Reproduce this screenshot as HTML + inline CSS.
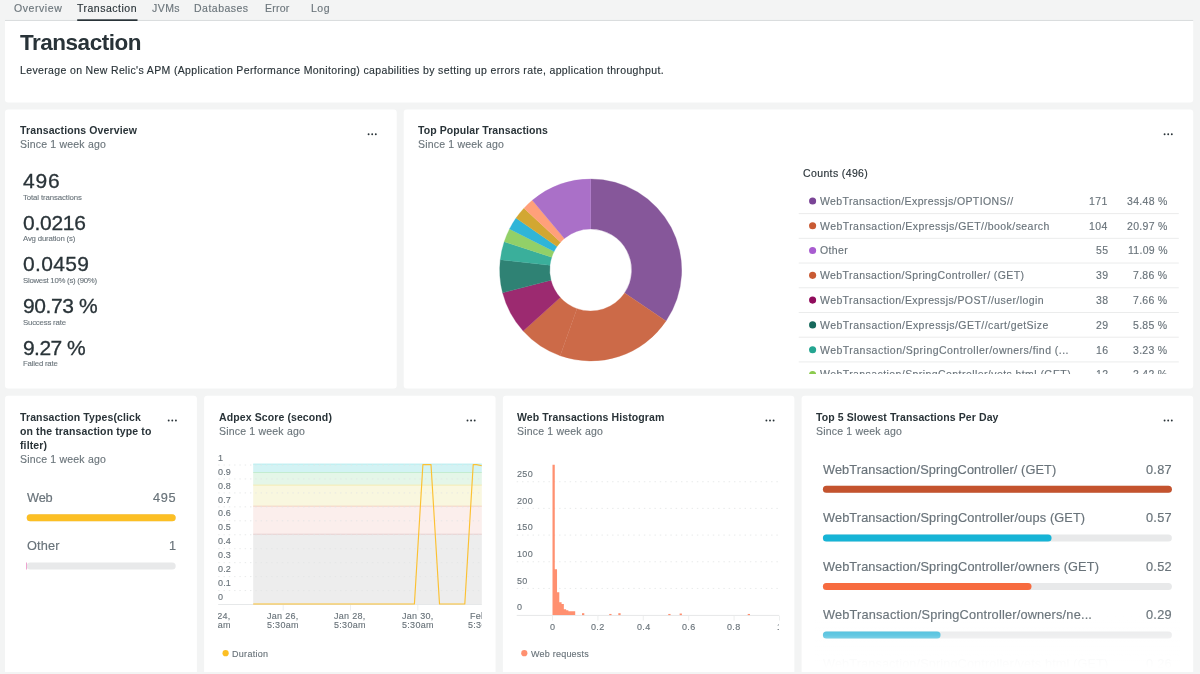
<!DOCTYPE html><html lang="en"><head><meta charset="utf-8"><title>Transaction</title><style>
html,body{margin:0;padding:0}
body{width:1200px;height:674px;overflow:hidden;background:#f3f4f4;font-family:"Liberation Sans", sans-serif;position:relative;-webkit-font-smoothing:antialiased}
.card{position:absolute;overflow:hidden}
.t{position:absolute;white-space:pre;line-height:1;display:block;will-change:transform}
.abs{position:absolute;display:block}
.clip{overflow:hidden}
.fade{background:linear-gradient(to bottom,rgba(255,255,255,0) 0%,rgba(255,255,255,.08) 17%,rgba(255,255,255,.25) 39%,rgba(255,255,255,.6) 56%,rgba(255,255,255,.94) 66%,rgba(255,255,255,.975) 85%,#fff 95%,#fff 100%)}
</style></head><body><svg class="abs" style="left:0;top:0" width="1200" height="674" fill="#fff"><path d="M5 21.0H1193.2V99.45A3 3 0 0 1 1190.2 102.45H8A3 3 0 0 1 5 99.45V21.0Z"/><path d="M8 109.5H393.7A3 3 0 0 1 396.7 112.5V385.5A3 3 0 0 1 393.7 388.5H8A3 3 0 0 1 5 385.5V112.5A3 3 0 0 1 8 109.5Z"/><path d="M406.7 109.5H1190.2A3 3 0 0 1 1193.2 112.5V385.5A3 3 0 0 1 1190.2 388.5H406.7A3 3 0 0 1 403.7 385.5V112.5A3 3 0 0 1 406.7 109.5Z"/><path d="M8 395.7H193.9A3 3 0 0 1 196.9 398.7V672H5V398.7A3 3 0 0 1 8 395.7Z"/><path d="M207.1 395.7H492.55A3 3 0 0 1 495.55 398.7V672H204.1V398.7A3 3 0 0 1 207.1 395.7Z"/><path d="M505.9 395.7H791.35A3 3 0 0 1 794.35 398.7V672H502.9V398.7A3 3 0 0 1 505.9 395.7Z"/><path d="M804.6 395.7H1190.2A3 3 0 0 1 1193.2 398.7V672H801.6V398.7A3 3 0 0 1 804.6 395.7Z"/></svg><nav class="card nav" style="left:0px;top:0px;width:1200px;height:21px"><span class="t" style="left:14.10px;top:2.71px;font-size:10.5px;color:#6b757b;letter-spacing:0.567px;-webkit-text-stroke:0.147px #6b757b;">Overview</span><span class="t" style="left:77.40px;top:2.71px;font-size:10.5px;color:#293338;letter-spacing:0.503px;-webkit-text-stroke:0.147px #293338;">Transaction</span><span class="t" style="left:152.10px;top:2.71px;font-size:10.5px;color:#6b757b;letter-spacing:0.438px;-webkit-text-stroke:0.147px #6b757b;">JVMs</span><span class="t" style="left:194.40px;top:2.71px;font-size:10.5px;color:#6b757b;letter-spacing:0.489px;-webkit-text-stroke:0.147px #6b757b;">Databases</span><span class="t" style="left:265.20px;top:2.71px;font-size:10.5px;color:#6b757b;letter-spacing:0.251px;-webkit-text-stroke:0.147px #6b757b;">Error</span><span class="t" style="left:310.50px;top:2.71px;font-size:10.5px;color:#6b757b;letter-spacing:0.490px;-webkit-text-stroke:0.147px #6b757b;">Log</span><svg class="abs" style="left:0;top:17px" width="1200" height="5"><rect x="5" y="2.95" width="1188.2" height="1" fill="#d9dcdd"/><rect x="77.2" y="2.3" width="60.3" height="1.75" fill="#293338"/></svg></nav><header class="card hdr" style="left:5px;top:21px;width:1189px;height:82px"><span class="t" style="left:15.00px;top:10.65px;font-size:22.5px;font-weight:700;color:#293338;letter-spacing:-0.482px;">Transaction</span><span class="t" style="left:15.00px;top:44.31px;font-size:10.5px;color:#293338;letter-spacing:0.360px;-webkit-text-stroke:0.147px #293338;">Leverage on New Relic's APM (Application Performance Monitoring) capabilities by setting up errors rate, application throughput.</span></header><section class="card " style="left:5px;top:109px;width:392px;height:280px"><span class="t" style="left:15.00px;top:16.11px;font-size:10.5px;font-weight:700;color:#293338;letter-spacing:0.124px;">Transactions Overview</span><span class="t" style="left:15.00px;top:30.21px;font-size:10.5px;color:#6b757b;letter-spacing:0.194px;-webkit-text-stroke:0.147px #6b757b;">Since 1 week ago</span><svg class="abs" style="left:362px;top:23px" width="14" height="6" fill="#293338"><circle cx="1.60" cy="2.30" r="0.95"/><circle cx="5.20" cy="2.30" r="0.95"/><circle cx="8.80" cy="2.30" r="0.95"/></svg><span class="t" style="left:18.00px;top:61.12px;font-size:21px;color:#293338;letter-spacing:0.818px;-webkit-text-stroke:0.3px #293338;">496</span><span class="t" style="left:18.00px;top:84.70px;font-size:7.8px;color:#69737a;letter-spacing:-0.105px;-webkit-text-stroke:0.109px #69737a;">Total transactions</span><span class="t" style="left:18.00px;top:102.77px;font-size:21px;color:#293338;letter-spacing:-0.256px;-webkit-text-stroke:0.3px #293338;">0.0216</span><span class="t" style="left:18.00px;top:126.35px;font-size:7.8px;color:#69737a;letter-spacing:-0.169px;-webkit-text-stroke:0.109px #69737a;">Avg duration (s)</span><span class="t" style="left:18.00px;top:144.42px;font-size:21px;color:#293338;letter-spacing:0.344px;-webkit-text-stroke:0.3px #293338;">0.0459</span><span class="t" style="left:18.00px;top:168.00px;font-size:7.8px;color:#69737a;letter-spacing:-0.262px;-webkit-text-stroke:0.109px #69737a;">Slowest 10% (s) (90%)</span><span class="t" style="left:18.00px;top:186.07px;font-size:21px;color:#293338;letter-spacing:-0.380px;-webkit-text-stroke:0.3px #293338;">90.73 %</span><span class="t" style="left:18.00px;top:209.65px;font-size:7.8px;color:#69737a;letter-spacing:-0.190px;-webkit-text-stroke:0.109px #69737a;">Success rate</span><span class="t" style="left:18.00px;top:227.72px;font-size:21px;color:#293338;letter-spacing:-0.565px;-webkit-text-stroke:0.3px #293338;">9.27 %</span><span class="t" style="left:18.00px;top:251.30px;font-size:7.8px;color:#69737a;letter-spacing:-0.204px;-webkit-text-stroke:0.109px #69737a;">Failed rate</span></section><section class="card " style="left:403px;top:109px;width:791px;height:280px"><span class="t" style="left:15.30px;top:16.11px;font-size:10.5px;font-weight:700;color:#293338;letter-spacing:0.076px;">Top Popular Transactions</span><span class="t" style="left:15.30px;top:30.21px;font-size:10.5px;color:#6b757b;letter-spacing:0.194px;-webkit-text-stroke:0.147px #6b757b;">Since 1 week ago</span><svg class="abs" style="left:760px;top:23px" width="14" height="6" fill="#293338"><circle cx="1.60" cy="2.30" r="0.95"/><circle cx="5.20" cy="2.30" r="0.95"/><circle cx="8.80" cy="2.30" r="0.95"/></svg><svg class="abs" style="left:0;top:0" width="791.0" height="280.0"><path d="M187.70 70.00A91 91 0 0 1 263.04 212.04L221.65 183.99A41 41 0 0 0 187.70 120.00Z" fill="#86579a" stroke="#86579a" stroke-width="0.3"/><path d="M263.04 212.04A91 91 0 0 1 157.18 246.73L173.95 199.63A41 41 0 0 0 221.65 183.99Z" fill="#cc6a48" stroke="#cc6a48" stroke-width="0.3"/><path d="M157.18 246.73A91 91 0 0 1 120.18 222.01L157.28 188.49A41 41 0 0 0 173.95 199.63Z" fill="#cc6a48" stroke="#cc6a48" stroke-width="0.3"/><path d="M120.18 222.01A91 91 0 0 1 99.60 183.81L148.01 171.28A41 41 0 0 0 157.28 188.49Z" fill="#9c2a70" stroke="#9c2a70" stroke-width="0.3"/><path d="M99.60 183.81A91 91 0 0 1 97.29 150.65L146.97 156.34A41 41 0 0 0 148.01 171.28Z" fill="#2f8274" stroke="#2f8274" stroke-width="0.3"/><path d="M97.29 150.65A91 91 0 0 1 101.23 132.66L148.74 148.23A41 41 0 0 0 146.97 156.34Z" fill="#3aaf9b" stroke="#3aaf9b" stroke-width="0.3"/><path d="M101.23 132.66A91 91 0 0 1 106.51 119.89L151.12 142.48A41 41 0 0 0 148.74 148.23Z" fill="#92d068" stroke="#92d068" stroke-width="0.3"/><path d="M106.51 119.89A91 91 0 0 1 113.01 109.01L154.05 137.58A41 41 0 0 0 151.12 142.48Z" fill="#2fb5d8" stroke="#2fb5d8" stroke-width="0.3"/><path d="M113.01 109.01A91 91 0 0 1 120.95 99.14L157.63 133.13A41 41 0 0 0 154.05 137.58Z" fill="#d2a732" stroke="#d2a732" stroke-width="0.3"/><path d="M120.95 99.14A91 91 0 0 1 129.30 91.21L161.39 129.56A41 41 0 0 0 157.63 133.13Z" fill="#ffa07a" stroke="#ffa07a" stroke-width="0.3"/><path d="M129.30 91.21A91 91 0 0 1 187.70 70.00L187.70 120.00A41 41 0 0 0 161.39 129.56Z" fill="#aa70c8" stroke="#aa70c8" stroke-width="0.3"/></svg><span class="t" style="left:400.30px;top:58.71px;font-size:10.5px;color:#293338;letter-spacing:0.375px;-webkit-text-stroke:0.147px #293338;">Counts (496)</span><svg class="abs" style="left:404px;top:87px" width="11" height="11"><circle cx="5.60" cy="5.00" r="3.55" fill="#7a4496"/></svg><span class="t" style="left:416.60px;top:86.91px;font-size:10.5px;color:#69737a;letter-spacing:0.388px;-webkit-text-stroke:0.147px #69737a;">WebTransaction/Expressjs/OPTIONS//</span><span class="t" style="left:686.37px;top:86.91px;font-size:10.5px;color:#69737a;letter-spacing:0.450px;-webkit-text-stroke:0.147px #69737a;">171</span><span class="t" style="left:723.97px;top:86.91px;font-size:10.5px;color:#69737a;letter-spacing:0.300px;-webkit-text-stroke:0.147px #69737a;">34.48 %</span><svg class="abs" style="left:395px;top:102px" width="382" height="5"><rect x="0.70" y="2.10" width="380.10" height="1" fill="#ebecec"/></svg><svg class="abs" style="left:404px;top:111px" width="11" height="11"><circle cx="5.60" cy="5.78" r="3.55" fill="#c95a33"/></svg><span class="t" style="left:416.60px;top:111.69px;font-size:10.5px;color:#69737a;letter-spacing:0.438px;-webkit-text-stroke:0.147px #69737a;">WebTransaction/Expressjs/GET//book/search</span><span class="t" style="left:686.37px;top:111.69px;font-size:10.5px;color:#69737a;letter-spacing:0.450px;-webkit-text-stroke:0.147px #69737a;">104</span><span class="t" style="left:723.97px;top:111.69px;font-size:10.5px;color:#69737a;letter-spacing:0.300px;-webkit-text-stroke:0.147px #69737a;">20.97 %</span><svg class="abs" style="left:395px;top:127px" width="382" height="5"><rect x="0.70" y="1.82" width="380.10" height="1" fill="#ebecec"/></svg><svg class="abs" style="left:404px;top:136px" width="11" height="11"><circle cx="5.60" cy="5.56" r="3.55" fill="#a85cd0"/></svg><span class="t" style="left:416.60px;top:136.47px;font-size:10.5px;color:#69737a;letter-spacing:0.387px;-webkit-text-stroke:0.147px #69737a;">Other</span><span class="t" style="left:692.66px;top:136.47px;font-size:10.5px;color:#69737a;letter-spacing:0.450px;-webkit-text-stroke:0.147px #69737a;">55</span><span class="t" style="left:724.75px;top:136.47px;font-size:10.5px;color:#69737a;letter-spacing:0.300px;-webkit-text-stroke:0.147px #69737a;">11.09 %</span><svg class="abs" style="left:395px;top:152px" width="382" height="5"><rect x="0.70" y="1.54" width="380.10" height="1" fill="#ebecec"/></svg><svg class="abs" style="left:404px;top:161px" width="11" height="11"><circle cx="5.60" cy="5.34" r="3.55" fill="#c95a33"/></svg><span class="t" style="left:416.60px;top:161.25px;font-size:10.5px;color:#69737a;letter-spacing:0.403px;-webkit-text-stroke:0.147px #69737a;">WebTransaction/SpringController/ (GET)</span><span class="t" style="left:692.66px;top:161.25px;font-size:10.5px;color:#69737a;letter-spacing:0.450px;-webkit-text-stroke:0.147px #69737a;">39</span><span class="t" style="left:730.10px;top:161.25px;font-size:10.5px;color:#69737a;letter-spacing:0.300px;-webkit-text-stroke:0.147px #69737a;">7.86 %</span><svg class="abs" style="left:395px;top:176px" width="382" height="5"><rect x="0.70" y="2.26" width="380.10" height="1" fill="#ebecec"/></svg><svg class="abs" style="left:404px;top:186px" width="11" height="11"><circle cx="5.60" cy="5.12" r="3.55" fill="#900c5c"/></svg><span class="t" style="left:416.60px;top:186.03px;font-size:10.5px;color:#69737a;letter-spacing:0.408px;-webkit-text-stroke:0.147px #69737a;">WebTransaction/Expressjs/POST//user/login</span><span class="t" style="left:692.66px;top:186.03px;font-size:10.5px;color:#69737a;letter-spacing:0.450px;-webkit-text-stroke:0.147px #69737a;">38</span><span class="t" style="left:730.10px;top:186.03px;font-size:10.5px;color:#69737a;letter-spacing:0.300px;-webkit-text-stroke:0.147px #69737a;">7.66 %</span><svg class="abs" style="left:395px;top:201px" width="382" height="5"><rect x="0.70" y="1.98" width="380.10" height="1" fill="#ebecec"/></svg><svg class="abs" style="left:404px;top:210px" width="11" height="11"><circle cx="5.60" cy="5.90" r="3.55" fill="#17695c"/></svg><span class="t" style="left:416.60px;top:210.81px;font-size:10.5px;color:#69737a;letter-spacing:0.446px;-webkit-text-stroke:0.147px #69737a;">WebTransaction/Expressjs/GET//cart/getSize</span><span class="t" style="left:692.66px;top:210.81px;font-size:10.5px;color:#69737a;letter-spacing:0.450px;-webkit-text-stroke:0.147px #69737a;">29</span><span class="t" style="left:730.10px;top:210.81px;font-size:10.5px;color:#69737a;letter-spacing:0.300px;-webkit-text-stroke:0.147px #69737a;">5.85 %</span><svg class="abs" style="left:395px;top:226px" width="382" height="5"><rect x="0.70" y="1.70" width="380.10" height="1" fill="#ebecec"/></svg><svg class="abs" style="left:404px;top:235px" width="11" height="11"><circle cx="5.60" cy="5.68" r="3.55" fill="#24a591"/></svg><span class="t" style="left:416.60px;top:235.59px;font-size:10.5px;color:#69737a;letter-spacing:0.470px;-webkit-text-stroke:0.147px #69737a;">WebTransaction/SpringController/owners/find (...</span><span class="t" style="left:692.66px;top:235.59px;font-size:10.5px;color:#69737a;letter-spacing:0.450px;-webkit-text-stroke:0.147px #69737a;">16</span><span class="t" style="left:730.10px;top:235.59px;font-size:10.5px;color:#69737a;letter-spacing:0.300px;-webkit-text-stroke:0.147px #69737a;">3.23 %</span><svg class="abs" style="left:395px;top:250px" width="382" height="5"><rect x="0.70" y="2.42" width="380.10" height="1" fill="#ebecec"/></svg><svg class="abs" style="left:404px;top:260px" width="11" height="11"><circle cx="5.60" cy="5.46" r="3.55" fill="#8ccb4f"/></svg><span class="t" style="left:416.60px;top:260.37px;font-size:10.5px;color:#69737a;letter-spacing:0.426px;-webkit-text-stroke:0.147px #69737a;">WebTransaction/SpringController/vets.html (GET)</span><span class="t" style="left:692.66px;top:260.37px;font-size:10.5px;color:#69737a;letter-spacing:0.450px;-webkit-text-stroke:0.147px #69737a;">12</span><span class="t" style="left:730.10px;top:260.37px;font-size:10.5px;color:#69737a;letter-spacing:0.300px;-webkit-text-stroke:0.147px #69737a;">2.42 %</span><div class="abs" style="left:393.70px;top:265.40px;width:390px;height:13px;background:#fff"></div></section><section class="card r2" style="left:5px;top:395px;width:192px;height:277px"><span class="t" style="left:15.00px;top:16.51px;font-size:10.5px;font-weight:700;color:#293338;letter-spacing:0.120px;">Transaction Types(click</span><span class="t" style="left:15.00px;top:30.61px;font-size:10.5px;font-weight:700;color:#293338;letter-spacing:0.120px;">on the transaction type to</span><span class="t" style="left:15.00px;top:44.61px;font-size:10.5px;font-weight:700;color:#293338;letter-spacing:0.120px;">filter)</span><span class="t" style="left:15.00px;top:58.71px;font-size:10.5px;color:#6b757b;letter-spacing:0.194px;-webkit-text-stroke:0.147px #6b757b;">Since 1 week ago</span><svg class="abs" style="left:162px;top:23px" width="14" height="6" fill="#293338"><circle cx="1.70" cy="2.50" r="0.95"/><circle cx="5.30" cy="2.50" r="0.95"/><circle cx="8.90" cy="2.50" r="0.95"/></svg><span class="t" style="left:21.70px;top:96.91px;font-size:12.75px;color:#69737a;letter-spacing:-0.167px;-webkit-text-stroke:0.178px #69737a;">Web</span><span class="t" style="left:148.22px;top:96.91px;font-size:12.75px;color:#69737a;letter-spacing:0.600px;-webkit-text-stroke:0.178px #69737a;">495</span><svg class="abs" style="left:20px;top:118px" width="152" height="10"><rect x="1.70" y="1.20" width="149.00" height="7.0" rx="3.5" fill="#e8e9ea"/><rect x="1.70" y="1.20" width="149.00" height="7.0" rx="3.5" fill="#fcbf24"/></svg><span class="t" style="left:21.70px;top:145.21px;font-size:12.75px;color:#69737a;letter-spacing:0.142px;-webkit-text-stroke:0.178px #69737a;">Other</span><span class="t" style="left:163.61px;top:145.21px;font-size:12.75px;color:#69737a;letter-spacing:0.600px;-webkit-text-stroke:0.178px #69737a;">1</span><svg class="abs" style="left:20px;top:166px" width="152" height="10"><rect x="1.70" y="1.50" width="149.00" height="7.0" rx="3.5" fill="#e8e9ea"/><rect x="1.00" y="1.50" width="0.9" height="7.0" fill="#ec9acb"/></svg></section><section class="card r2" style="left:204px;top:395px;width:292px;height:277px"><span class="t" style="left:14.70px;top:16.51px;font-size:10.5px;font-weight:700;color:#293338;letter-spacing:0.106px;">Adpex Score (second)</span><span class="t" style="left:14.70px;top:30.61px;font-size:10.5px;color:#6b757b;letter-spacing:0.194px;-webkit-text-stroke:0.147px #6b757b;">Since 1 week ago</span><svg class="abs" style="left:262px;top:23px" width="14" height="6" fill="#293338"><circle cx="1.50" cy="2.50" r="0.95"/><circle cx="5.10" cy="2.50" r="0.95"/><circle cx="8.70" cy="2.50" r="0.95"/></svg><svg class="abs" style="left:0;top:0" width="292.0" height="277.0" viewBox="204 395 292.0 277.0"><rect x="253.2" y="464.00" width="228.60000000000002" height="8.41" fill="#d3f3f4"/><rect x="253.2" y="463.60" width="228.60000000000002" height="1" fill="#b5eef0"/><rect x="253.2" y="472.41" width="228.60000000000002" height="12.62" fill="#e4f6e8"/><rect x="253.2" y="472.01" width="228.60000000000002" height="1" fill="#c4ecd0"/><rect x="253.2" y="485.03" width="228.60000000000002" height="21.03" fill="#f9f7df"/><rect x="253.2" y="484.63" width="228.60000000000002" height="1" fill="#f4ecb5"/><rect x="253.2" y="506.06" width="228.60000000000002" height="28.04" fill="#fbeeec"/><rect x="253.2" y="505.66" width="228.60000000000002" height="1" fill="#f4d2c0"/><rect x="253.2" y="534.10" width="228.60000000000002" height="70.10" fill="#ededed"/><rect x="253.2" y="533.70" width="228.60000000000002" height="1" fill="#e8cfcf"/><line x1="218.2" x2="481.8" y1="590.55" y2="590.55" stroke="#e2e4e5" stroke-width="0.8" stroke-dasharray="1.4 3.9"/><line x1="218.2" x2="481.8" y1="576.60" y2="576.60" stroke="#e2e4e5" stroke-width="0.8" stroke-dasharray="1.4 3.9"/><line x1="218.2" x2="481.8" y1="562.65" y2="562.65" stroke="#e2e4e5" stroke-width="0.8" stroke-dasharray="1.4 3.9"/><line x1="218.2" x2="481.8" y1="548.70" y2="548.70" stroke="#e2e4e5" stroke-width="0.8" stroke-dasharray="1.4 3.9"/><line x1="218.2" x2="481.8" y1="534.75" y2="534.75" stroke="#e2e4e5" stroke-width="0.8" stroke-dasharray="1.4 3.9"/><line x1="218.2" x2="481.8" y1="520.80" y2="520.80" stroke="#e2e4e5" stroke-width="0.8" stroke-dasharray="1.4 3.9"/><line x1="218.2" x2="481.8" y1="506.85" y2="506.85" stroke="#e2e4e5" stroke-width="0.8" stroke-dasharray="1.4 3.9"/><line x1="218.2" x2="481.8" y1="492.90" y2="492.90" stroke="#e2e4e5" stroke-width="0.8" stroke-dasharray="1.4 3.9"/><line x1="218.2" x2="481.8" y1="478.95" y2="478.95" stroke="#e2e4e5" stroke-width="0.8" stroke-dasharray="1.4 3.9"/><line x1="218.2" x2="481.8" y1="465.00" y2="465.00" stroke="#e2e4e5" stroke-width="0.8" stroke-dasharray="1.4 3.9"/><line x1="218.2" x2="481.8" y1="604.5" y2="604.5" stroke="#e3e5e6" stroke-width="0.9"/><polyline fill="none" stroke="#fcc132" stroke-width="1.15" stroke-linejoin="round" points="253.2,604.0 414.4,604.0 422.9,464.6 431.0,464.6 439.5,604.0 464.8,604.0 473.2,464.6 476.5,464.6 481.8,465.7"/><line x1="283.2" x2="283.2" y1="605" y2="610.5" stroke="#e9ebeb" stroke-width="0.8"/><line x1="350.5" x2="350.5" y1="605" y2="610.5" stroke="#e9ebeb" stroke-width="0.8"/><line x1="417.8" x2="417.8" y1="605" y2="610.5" stroke="#e9ebeb" stroke-width="0.8"/></svg><span class="t" style="left:14.30px;top:197.98px;font-size:9px;color:#69737a;letter-spacing:0.150px;-webkit-text-stroke:0.126px #69737a;">0</span><span class="t" style="left:14.30px;top:184.06px;font-size:9px;color:#69737a;letter-spacing:0.150px;-webkit-text-stroke:0.126px #69737a;">0.1</span><span class="t" style="left:14.30px;top:170.14px;font-size:9px;color:#69737a;letter-spacing:0.150px;-webkit-text-stroke:0.126px #69737a;">0.2</span><span class="t" style="left:14.30px;top:156.22px;font-size:9px;color:#69737a;letter-spacing:0.150px;-webkit-text-stroke:0.126px #69737a;">0.3</span><span class="t" style="left:14.30px;top:142.30px;font-size:9px;color:#69737a;letter-spacing:0.150px;-webkit-text-stroke:0.126px #69737a;">0.4</span><span class="t" style="left:14.30px;top:128.38px;font-size:9px;color:#69737a;letter-spacing:0.150px;-webkit-text-stroke:0.126px #69737a;">0.5</span><span class="t" style="left:14.30px;top:114.46px;font-size:9px;color:#69737a;letter-spacing:0.150px;-webkit-text-stroke:0.126px #69737a;">0.6</span><span class="t" style="left:14.30px;top:100.54px;font-size:9px;color:#69737a;letter-spacing:0.150px;-webkit-text-stroke:0.126px #69737a;">0.7</span><span class="t" style="left:14.30px;top:86.62px;font-size:9px;color:#69737a;letter-spacing:0.150px;-webkit-text-stroke:0.126px #69737a;">0.8</span><span class="t" style="left:14.30px;top:72.70px;font-size:9px;color:#69737a;letter-spacing:0.150px;-webkit-text-stroke:0.126px #69737a;">0.9</span><span class="t" style="left:14.30px;top:58.78px;font-size:9px;color:#69737a;letter-spacing:0.150px;-webkit-text-stroke:0.126px #69737a;">1</span><div class="abs clip" style="left:14.00px;top:215.00px;width:263.60px;height:24px"><span class="t" style="left:-18.97px;top:2.38px;font-size:9px;color:#69737a;letter-spacing:0.300px;-webkit-text-stroke:0.126px #69737a;">Jan 24,</span><span class="t" style="left:-19.07px;top:11.28px;font-size:9px;color:#69737a;letter-spacing:0.300px;-webkit-text-stroke:0.126px #69737a;">5:30am</span><span class="t" style="left:49.13px;top:2.38px;font-size:9px;color:#69737a;letter-spacing:0.300px;-webkit-text-stroke:0.126px #69737a;">Jan 26,</span><span class="t" style="left:49.03px;top:11.28px;font-size:9px;color:#69737a;letter-spacing:0.300px;-webkit-text-stroke:0.126px #69737a;">5:30am</span><span class="t" style="left:116.43px;top:2.38px;font-size:9px;color:#69737a;letter-spacing:0.300px;-webkit-text-stroke:0.126px #69737a;">Jan 28,</span><span class="t" style="left:116.33px;top:11.28px;font-size:9px;color:#69737a;letter-spacing:0.300px;-webkit-text-stroke:0.126px #69737a;">5:30am</span><span class="t" style="left:183.73px;top:2.38px;font-size:9px;color:#69737a;letter-spacing:0.300px;-webkit-text-stroke:0.126px #69737a;">Jan 30,</span><span class="t" style="left:183.63px;top:11.28px;font-size:9px;color:#69737a;letter-spacing:0.300px;-webkit-text-stroke:0.126px #69737a;">5:30am</span><span class="t" style="left:252.49px;top:2.38px;font-size:9px;color:#69737a;letter-spacing:0.300px;-webkit-text-stroke:0.126px #69737a;">Feb 1,</span><span class="t" style="left:250.23px;top:11.28px;font-size:9px;color:#69737a;letter-spacing:0.300px;-webkit-text-stroke:0.126px #69737a;">5:30am</span></div><svg class="abs" style="left:16px;top:253px" width="11" height="11"><circle cx="5.60" cy="5.20" r="3.1" fill="#fcbf24"/></svg><span class="t" style="left:28.10px;top:254.78px;font-size:9px;color:#69737a;letter-spacing:0.300px;-webkit-text-stroke:0.126px #69737a;">Duration</span></section><section class="card r2" style="left:502px;top:395px;width:293px;height:277px"><span class="t" style="left:15.30px;top:16.51px;font-size:10.5px;font-weight:700;color:#293338;letter-spacing:0.111px;">Web Transactions Histogram</span><span class="t" style="left:15.30px;top:30.61px;font-size:10.5px;color:#6b757b;letter-spacing:0.194px;-webkit-text-stroke:0.147px #6b757b;">Since 1 week ago</span><svg class="abs" style="left:263px;top:23px" width="14" height="6" fill="#293338"><circle cx="1.40" cy="2.50" r="0.95"/><circle cx="5.00" cy="2.50" r="0.95"/><circle cx="8.60" cy="2.50" r="0.95"/></svg><svg class="abs" style="left:0;top:0" width="293.0" height="277.0" viewBox="502 395 293.0 277.0"><line x1="516.7" x2="779" y1="588.43" y2="588.43" stroke="#e2e4e5" stroke-width="0.8" stroke-dasharray="1.4 3.9"/><line x1="516.7" x2="779" y1="561.75" y2="561.75" stroke="#e2e4e5" stroke-width="0.8" stroke-dasharray="1.4 3.9"/><line x1="516.7" x2="779" y1="535.08" y2="535.08" stroke="#e2e4e5" stroke-width="0.8" stroke-dasharray="1.4 3.9"/><line x1="516.7" x2="779" y1="508.40" y2="508.40" stroke="#e2e4e5" stroke-width="0.8" stroke-dasharray="1.4 3.9"/><line x1="516.7" x2="779" y1="481.73" y2="481.73" stroke="#e2e4e5" stroke-width="0.8" stroke-dasharray="1.4 3.9"/><line x1="516.7" x2="779" y1="615.45" y2="615.45" stroke="#e3e5e6" stroke-width="0.9"/><path d="M552.50 615.1V464.65H554.77V569.22H557.04V592.16H559.31V602.30H561.58V603.90H563.85V609.23H566.12V610.30H568.39V611.37H570.66V611.37H572.93V611.37H575.20V615.1Z" fill="#ff9070"/><rect x="582.01" y="613.20" width="2.27" height="1.90" fill="#ff9070"/><rect x="609.25" y="613.95" width="2.27" height="1.15" fill="#ff9070"/><rect x="618.33" y="613.20" width="2.27" height="1.90" fill="#ff9070"/><rect x="668.27" y="613.95" width="2.27" height="1.15" fill="#ff9070"/><rect x="679.62" y="613.52" width="2.27" height="1.58" fill="#ff9070"/><rect x="747.72" y="613.95" width="2.27" height="1.15" fill="#ff9070"/><line x1="552.5" x2="552.5" y1="615.6" y2="620.6" stroke="#e9ebeb" stroke-width="0.8"/><line x1="597.9" x2="597.9" y1="615.6" y2="620.6" stroke="#e9ebeb" stroke-width="0.8"/><line x1="643.3" x2="643.3" y1="615.6" y2="620.6" stroke="#e9ebeb" stroke-width="0.8"/><line x1="688.7" x2="688.7" y1="615.6" y2="620.6" stroke="#e9ebeb" stroke-width="0.8"/><line x1="734.1" x2="734.1" y1="615.6" y2="620.6" stroke="#e9ebeb" stroke-width="0.8"/><line x1="779.5" x2="779.5" y1="615.6" y2="620.6" stroke="#e9ebeb" stroke-width="0.8"/></svg><span class="t" style="left:14.70px;top:208.38px;font-size:9px;color:#69737a;letter-spacing:0.350px;-webkit-text-stroke:0.126px #69737a;">0</span><span class="t" style="left:14.70px;top:181.71px;font-size:9px;color:#69737a;letter-spacing:0.350px;-webkit-text-stroke:0.126px #69737a;">50</span><span class="t" style="left:14.70px;top:155.03px;font-size:9px;color:#69737a;letter-spacing:0.350px;-webkit-text-stroke:0.126px #69737a;">100</span><span class="t" style="left:14.70px;top:128.36px;font-size:9px;color:#69737a;letter-spacing:0.350px;-webkit-text-stroke:0.126px #69737a;">150</span><span class="t" style="left:14.70px;top:101.68px;font-size:9px;color:#69737a;letter-spacing:0.350px;-webkit-text-stroke:0.126px #69737a;">200</span><span class="t" style="left:14.70px;top:75.01px;font-size:9px;color:#69737a;letter-spacing:0.350px;-webkit-text-stroke:0.126px #69737a;">250</span><div class="abs clip" style="left:14.00px;top:223.00px;width:262.60px;height:16px"><span class="t" style="left:33.99px;top:4.68px;font-size:9px;color:#69737a;letter-spacing:0.350px;-webkit-text-stroke:0.126px #69737a;">0</span><span class="t" style="left:75.29px;top:4.68px;font-size:9px;color:#69737a;letter-spacing:0.350px;-webkit-text-stroke:0.126px #69737a;">0.2</span><span class="t" style="left:120.69px;top:4.68px;font-size:9px;color:#69737a;letter-spacing:0.350px;-webkit-text-stroke:0.126px #69737a;">0.4</span><span class="t" style="left:166.09px;top:4.68px;font-size:9px;color:#69737a;letter-spacing:0.350px;-webkit-text-stroke:0.126px #69737a;">0.6</span><span class="t" style="left:211.49px;top:4.68px;font-size:9px;color:#69737a;letter-spacing:0.350px;-webkit-text-stroke:0.126px #69737a;">0.8</span><span class="t" style="left:260.99px;top:4.68px;font-size:9px;color:#69737a;letter-spacing:0.350px;-webkit-text-stroke:0.126px #69737a;">1</span></div><svg class="abs" style="left:17px;top:253px" width="11" height="11"><circle cx="5.30" cy="5.20" r="3.1" fill="#ff9070"/></svg><span class="t" style="left:29.40px;top:254.78px;font-size:9px;color:#69737a;letter-spacing:0.220px;-webkit-text-stroke:0.126px #69737a;">Web requests</span></section><section class="card r2" style="left:801px;top:395px;width:393px;height:277px"><span class="t" style="left:15.20px;top:16.51px;font-size:10.5px;font-weight:700;color:#293338;letter-spacing:0.087px;">Top 5 Slowest Transactions Per Day</span><span class="t" style="left:15.20px;top:30.61px;font-size:10.5px;color:#6b757b;letter-spacing:0.194px;-webkit-text-stroke:0.147px #6b757b;">Since 1 week ago</span><svg class="abs" style="left:362px;top:23px" width="14" height="6" fill="#293338"><circle cx="1.60" cy="2.50" r="0.95"/><circle cx="5.20" cy="2.50" r="0.95"/><circle cx="8.80" cy="2.50" r="0.95"/></svg><span class="t" style="left:21.90px;top:68.51px;font-size:12.75px;color:#69737a;letter-spacing:0.098px;-webkit-text-stroke:0.178px #69737a;">WebTransaction/SpringController/ (GET)</span><span class="t" style="left:344.92px;top:68.51px;font-size:12.75px;color:#69737a;letter-spacing:0.250px;-webkit-text-stroke:0.178px #69737a;">0.87</span><svg class="abs" style="left:20px;top:89px" width="353" height="10"><rect x="1.90" y="1.80" width="349.00" height="7.0" rx="3.5" fill="#e8e9ea"/><rect x="1.90" y="1.80" width="349.00" height="7.0" rx="3.5" fill="#c4532e"/></svg><span class="t" style="left:21.90px;top:117.11px;font-size:12.75px;color:#69737a;letter-spacing:0.118px;-webkit-text-stroke:0.178px #69737a;">WebTransaction/SpringController/oups (GET)</span><span class="t" style="left:344.92px;top:117.11px;font-size:12.75px;color:#69737a;letter-spacing:0.250px;-webkit-text-stroke:0.178px #69737a;">0.57</span><svg class="abs" style="left:20px;top:138px" width="353" height="10"><rect x="1.90" y="1.40" width="349.00" height="7.0" rx="3.5" fill="#e8e9ea"/><rect x="1.90" y="1.40" width="228.66" height="7.0" rx="3.5" fill="#16b4d6"/></svg><span class="t" style="left:21.90px;top:165.71px;font-size:12.75px;color:#69737a;letter-spacing:0.121px;-webkit-text-stroke:0.178px #69737a;">WebTransaction/SpringController/owners (GET)</span><span class="t" style="left:344.92px;top:165.71px;font-size:12.75px;color:#69737a;letter-spacing:0.250px;-webkit-text-stroke:0.178px #69737a;">0.52</span><svg class="abs" style="left:20px;top:187px" width="353" height="10"><rect x="1.90" y="1.00" width="349.00" height="7.0" rx="3.5" fill="#e8e9ea"/><rect x="1.90" y="1.00" width="208.60" height="7.0" rx="3.5" fill="#f76b3f"/></svg><span class="t" style="left:21.90px;top:214.31px;font-size:12.75px;color:#69737a;letter-spacing:0.189px;-webkit-text-stroke:0.178px #69737a;">WebTransaction/SpringController/owners/ne...</span><span class="t" style="left:344.92px;top:214.31px;font-size:12.75px;color:#69737a;letter-spacing:0.250px;-webkit-text-stroke:0.178px #69737a;">0.29</span><svg class="abs" style="left:20px;top:235px" width="353" height="10"><rect x="1.90" y="1.60" width="349.00" height="7.0" rx="3.5" fill="#e8e9ea"/><rect x="1.90" y="1.60" width="117.68" height="7.0" rx="3.5" fill="#2fb5d8"/></svg><span class="t" style="left:21.90px;top:262.91px;font-size:12.75px;color:#69737a;letter-spacing:0.100px;-webkit-text-stroke:0.178px #69737a;">WebTransaction/SpringController/vets.html (GET)</span><span class="t" style="left:344.92px;top:262.91px;font-size:12.75px;color:#69737a;letter-spacing:0.250px;-webkit-text-stroke:0.178px #69737a;">0.26</span><svg class="abs" style="left:20px;top:284px" width="353" height="10"><rect x="1.90" y="1.20" width="349.00" height="7.0" rx="3.5" fill="#e8e9ea"/><rect x="1.90" y="1.20" width="104.30" height="7.0" rx="3.5" fill="#d2a732"/></svg><div class="abs fade" style="left:14.00px;top:217.00px;width:365px;height:59.00px"></div></section></body></html>
